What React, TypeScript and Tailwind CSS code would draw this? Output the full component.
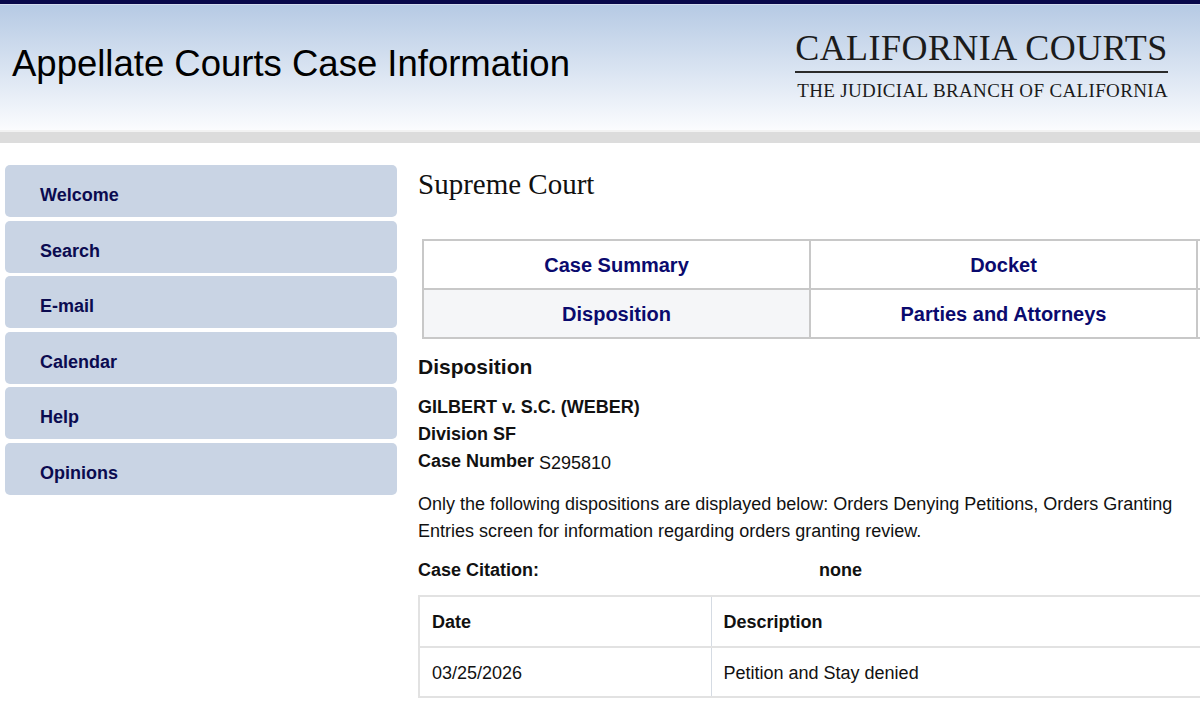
import React from 'react'

const sans = { fontFamily: '"Liberation Sans", Arial, sans-serif' }

const menu = ['Welcome', 'Search', 'E-mail', 'Calendar', 'Help', 'Opinions']

function Header() {
    return (
        <div>
            <div className="h-[4px] bg-[#08084a]" />
            <div className="h-[1px] bg-[#d2dcee]" />
            <div className="h-[125px] bg-gradient-to-b from-[#b6cae4] to-[#fbfcfe] flex items-center justify-between pl-3 pr-8">
                <h1 className="text-[36.5px] text-black leading-none -mt-[7px]">Appellate Courts Case Information</h1>
                <div className="flex flex-col items-stretch -mt-[6px] font-['Liberation_Serif',serif] text-[#1b1b1b]">
                    <div className="text-[36px] leading-none tracking-[0.45px] font-light">CALIFORNIA COURTS</div>
                    <div className="h-[2px] bg-[#2a2a2a] mt-[5px]" />
                    <div className="text-[19px] leading-none mt-[8px] tracking-[0.35px] pl-[2px]">THE JUDICIAL BRANCH OF CALIFORNIA</div>
                </div>
            </div>
            <div className="h-[2px] bg-[#f2f2f2]" />
            <div className="h-[11px] bg-[#dcdcdc]" />
        </div>
    )
}

function Sidebar() {
    return (
        <div className="w-[392px] shrink-0 flex flex-col gap-[3.5px] pt-[1px]">
            {menu.map((m) => (
                <div key={m} className="h-[52px] rounded-[5px] bg-[#c9d4e4] flex items-center pl-[35px] pt-[9px]">
                    <span className="text-[18px] font-bold text-[#0b0b50]">{m}</span>
                </div>
            ))}
        </div>
    )
}

function Tabs() {
    const cell = 'h-[47px] w-[387px] flex items-center justify-center text-[20px] font-bold text-[#0a0a6e] border-[#c8c8c8]'
    return (
        <div className="ml-[4px] mt-[40px] w-[1170px] border-2 border-[#c8c8c8]">
            <div className="flex border-b-2 border-[#c8c8c8]">
                <div className={cell + ' border-r-2'}>Case Summary</div>
                <div className={cell + ' border-r-2'}>Docket</div>
                <div className={cell} />
            </div>
            <div className="flex">
                <div className={cell + ' border-r-2 bg-[#f5f6f8]'}>Disposition</div>
                <div className={cell + ' border-r-2'}>Parties and Attorneys</div>
                <div className={cell} />
            </div>
        </div>
    )
}

export default function App() {
    return (
        <div className="w-full h-[709px] overflow-hidden bg-white" style={sans}>
            <Header />
            <div className="flex pt-[21px] pl-[5px]">
                <Sidebar />
                <div className="ml-[21px] shrink-0 w-[1200px]">
                    <h2 className="font-['Liberation_Serif',serif] text-[29px] leading-none text-[#111] pt-[6px]">Supreme Court</h2>
                    <Tabs />
                    <h3 className="text-[21px] font-bold text-[#111] mt-[17px] leading-none">Disposition</h3>
                    <div className="mt-[17px] text-[18px] leading-[27px] text-[#111]">
                        <div className="font-bold">GILBERT v. S.C. (WEBER)</div>
                        <div className="font-bold">Division SF</div>
                        <div>
                            <span className="font-bold">Case Number</span> <span className="relative top-[2px]">S295810</span>
                        </div>
                    </div>
                    <p className="mt-[16px] text-[18px] leading-[27px] text-[#111] whitespace-nowrap">
                        Only the following dispositions are displayed below: Orders Denying Petitions, Orders Granting
                        <br />
                        Entries screen for information regarding orders granting review.
                    </p>
                    <div className="mt-[12px] flex text-[18px] font-bold text-[#111]">
                        <span className="w-[401px]">Case Citation:</span>
                        <span>none</span>
                    </div>
                    <table className="mt-[11px] w-[1000px] border-collapse text-[18px] text-[#111]">
                        <tbody>
                            <tr className="h-[51px]">
                                <th className="w-[292px] text-left font-bold px-[12px] pt-[2px] border-2 border-[#e2e2e2] border-r border-r-[#d5dbe3]">Date</th>
                                <th className="text-left font-bold px-[12px] pt-[2px] border-2 border-[#e2e2e2] border-l border-l-[#d5dbe3]">Description</th>
                            </tr>
                            <tr className="h-[50px]">
                                <td className="px-[12px] pt-[2px] border-2 border-[#e2e2e2] border-r border-r-[#d5dbe3]">03/25/2026</td>
                                <td className="px-[12px] pt-[2px] border-2 border-[#e2e2e2] border-l border-l-[#d5dbe3]">Petition and Stay denied</td>
                            </tr>
                        </tbody>
                    </table>
                </div>
            </div>
        </div>
    )
}
